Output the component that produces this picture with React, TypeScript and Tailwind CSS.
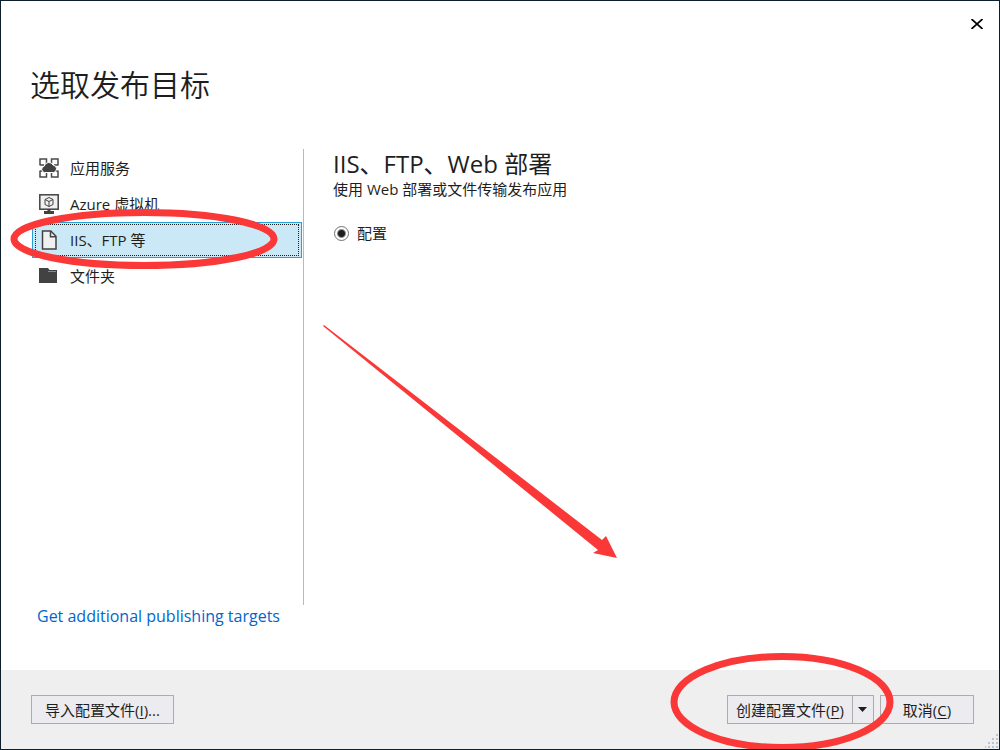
import type { ReactNode } from "react";

const targets = [
  { id: "app-service", label: "应用服务", icon: <AppServiceIcon /> },
  { id: "azure-vm", label: "Azure 虚拟机", icon: <VirtualMachineIcon /> },
  { id: "iis", label: "IIS、FTP 等", icon: <DocumentIcon /> },
  { id: "folder", label: "文件夹", icon: <FolderIcon /> },
];

const selected = "iis";

function AppServiceIcon() {
  return (
    <svg width="20" height="20" viewBox="0 0 20 20" fill="none" stroke="#4a4a4a" strokeWidth="1.5">
      <path d="M1 7.5V1h6.5v4.5M12.5 5.5V1H19v6.5M1 12.5V19h6.5v-4.5M12.5 14.5V19H19v-6.5M1 7h4M15 7h4M1 13h4M15 13h4" />
      <path
        d="M5.6 14.5a3.2 3.2 0 0 1-.4-6.3 4.8 4.8 0 0 1 9-1 3.7 3.7 0 0 1 .4 7.3z"
        fill="#424242"
        stroke="#fff"
        strokeWidth="1"
      />
    </svg>
  );
}

function VirtualMachineIcon() {
  return (
    <svg width="20" height="20" viewBox="0 0 20 20" fill="none" stroke="#424242">
      <rect x="0.8" y="0.8" width="18.4" height="14.4" fill="#f0eff1" strokeWidth="1.5" />
      <path d="M10 3.5l4 2v5l-4 2-4-2v-5zM6 5.5l4 2 4-2M10 7.5v5" />
      <path d="M10 15v3M5 18.5h10" strokeWidth="3" />
    </svg>
  );
}

function DocumentIcon() {
  return (
    <svg width="20" height="20" viewBox="0 0 20 20" fill="none" stroke="#424242" strokeWidth="1.5">
      <path d="M3.5 1h8.3L17 6.2V19H3.5z" fill="#f0eff1" />
      <path d="M11.5 1v5.7H17" />
    </svg>
  );
}

function FolderIcon() {
  return (
    <svg width="20" height="20" viewBox="0 0 20 20" fill="#424242">
      <path d="M0 2h9l1.5 2H18v13H0z" />
      <path d="M9 5.5h8" stroke="#8a8a8a" strokeWidth="1" />
    </svg>
  );
}

function ResizeGrip() {
  return (
    <svg width="14" height="16" className="absolute right-0 bottom-0" fill="#b9c3d6">
      <path d="M11 1h2v2h-2zM11 5h2v2h-2zM11 9h2v2h-2zM11 13h2v2h-2zM7 5h2v2H7zM7 9h2v2H7zM7 13h2v2H7zM3 9h2v2H3zM3 13h2v2H3zM0 13h1v2H0z" />
    </svg>
  );
}

const buttonStyle = "h-[29px] border border-[#acacac] bg-[#ecebf0] pt-px text-center hover:bg-[#dfe9f5]";

function AccessKey({ children }: { children: ReactNode }) {
  return <span className="underline underline-offset-2">{children}</span>;
}

export default function App() {
  return (
    <div className="relative flex min-h-screen flex-col overflow-hidden border border-[#0c1d2b] bg-white font-['Open_Sans','Noto_Sans_CJK_SC',sans-serif] text-[15px] text-[#1e1e1e]">
      {/* Title bar */}
      <header className="flex h-[46px] items-center justify-end pr-[10px]">
        <button aria-label="关闭" className="flex size-6 items-center justify-center">
          <svg width="12" height="10" viewBox="0 0 12 10" fill="none" stroke="#000" strokeWidth="1.7">
            <path d="M0.5 0l11 10M11.5 0l-11 10" />
          </svg>
        </button>
      </header>

      <h1 className="mt-4 pl-[29px] text-[30px] leading-[44px] font-[350]">选取发布目标</h1>

      <main className="mt-[42px] flex flex-1">
        {/* Publish targets */}
        <nav className="w-[303px] shrink-0 border-r border-[#b5b9c2] pt-px pl-[31px]">
          <ul className="pr-px">
            {targets.map((target) => (
              <li key={target.id} className="relative">
                <button
                  className={
                    target.id === selected
                      ? "flex h-9 w-full items-center border border-[#26a0da] bg-[#cbe8f6] px-0.5 py-px"
                      : "flex h-9 w-full items-center p-0.5"
                  }
                >
                  <span
                    className={
                      target.id === selected
                        ? "flex h-8 w-full items-center gap-[11px] border border-dotted border-[#1e1e1e] pl-[3px]"
                        : "flex h-8 w-full items-center gap-[11px] pl-[5px]"
                    }
                  >
                    {target.icon}
                    <span>{target.label}</span>
                  </span>
                </button>
                {target.id === selected && (
                  <svg
                    width="268"
                    height="62"
                    className="pointer-events-none absolute top-[-14px] left-[-22px] z-10"
                    fill="none"
                    stroke="#fb3838"
                    strokeWidth="7"
                  >
                    <ellipse cx="134" cy="31" rx="130" ry="26.5" />
                  </svg>
                )}
              </li>
            ))}
          </ul>
        </nav>

        {/* Target details */}
        <section className="relative flex-1 pl-[29px]">
          <h2 className="text-[24px] leading-[30px]">IIS、FTP、Web 部署</h2>
          <p className="leading-[20px]">使用 Web 部署或文件传输发布应用</p>
          <label className="mt-[22px] flex items-center gap-2 pl-px leading-6">
            <input
              type="radio"
              name="mode"
              defaultChecked
              className="size-[15px] appearance-none rounded-full border border-[#707070] bg-[radial-gradient(circle,#1e1e1e_3px,#fff_5px)]"
            />
            配置
          </label>
          <svg
            width="298"
            height="236"
            className="pointer-events-none absolute top-[175px] left-[16px]"
            fill="#fb3838"
          >
            <path d="M4 1L3 2 278 226 273 229 297 234 286 212 282 216z" />
          </svg>
        </section>
      </main>

      <div className="h-[65px] pl-9 text-base leading-[22px]">
        <a href="#targets" className="text-[#0066cc]">
          Get additional publishing targets
        </a>
      </div>

      {/* Actions */}
      <footer className="relative flex h-[79px] items-center bg-[#efefef] pr-[25px] pl-[30px]">
        <button className={`${buttonStyle} w-[143px]`}>
          导入配置文件(<AccessKey>I</AccessKey>)...
        </button>
        <div className="relative ml-auto flex">
          <button className={`${buttonStyle} w-[126px]`}>
            创建配置文件(<AccessKey>P</AccessKey>)
          </button>
          <button aria-label="更多选项" className={`${buttonStyle} -ml-px flex w-[22px] items-center justify-center`}>
            <svg width="10" height="6" fill="#1e1e1e">
              <path d="M0 0h9L4.5 5z" />
            </svg>
          </button>
          <svg
            width="224"
            height="98"
            className="pointer-events-none absolute top-[-43px] left-[-57px] z-10"
            fill="none"
            stroke="#fb3838"
            strokeWidth="7"
          >
            <ellipse cx="112" cy="50" rx="108" ry="45.5" />
          </svg>
        </div>
        <button className={`${buttonStyle} ml-[6px] w-[94px]`}>
          取消(<AccessKey>C</AccessKey>)
        </button>
        <ResizeGrip />
      </footer>
    </div>
  );
}
